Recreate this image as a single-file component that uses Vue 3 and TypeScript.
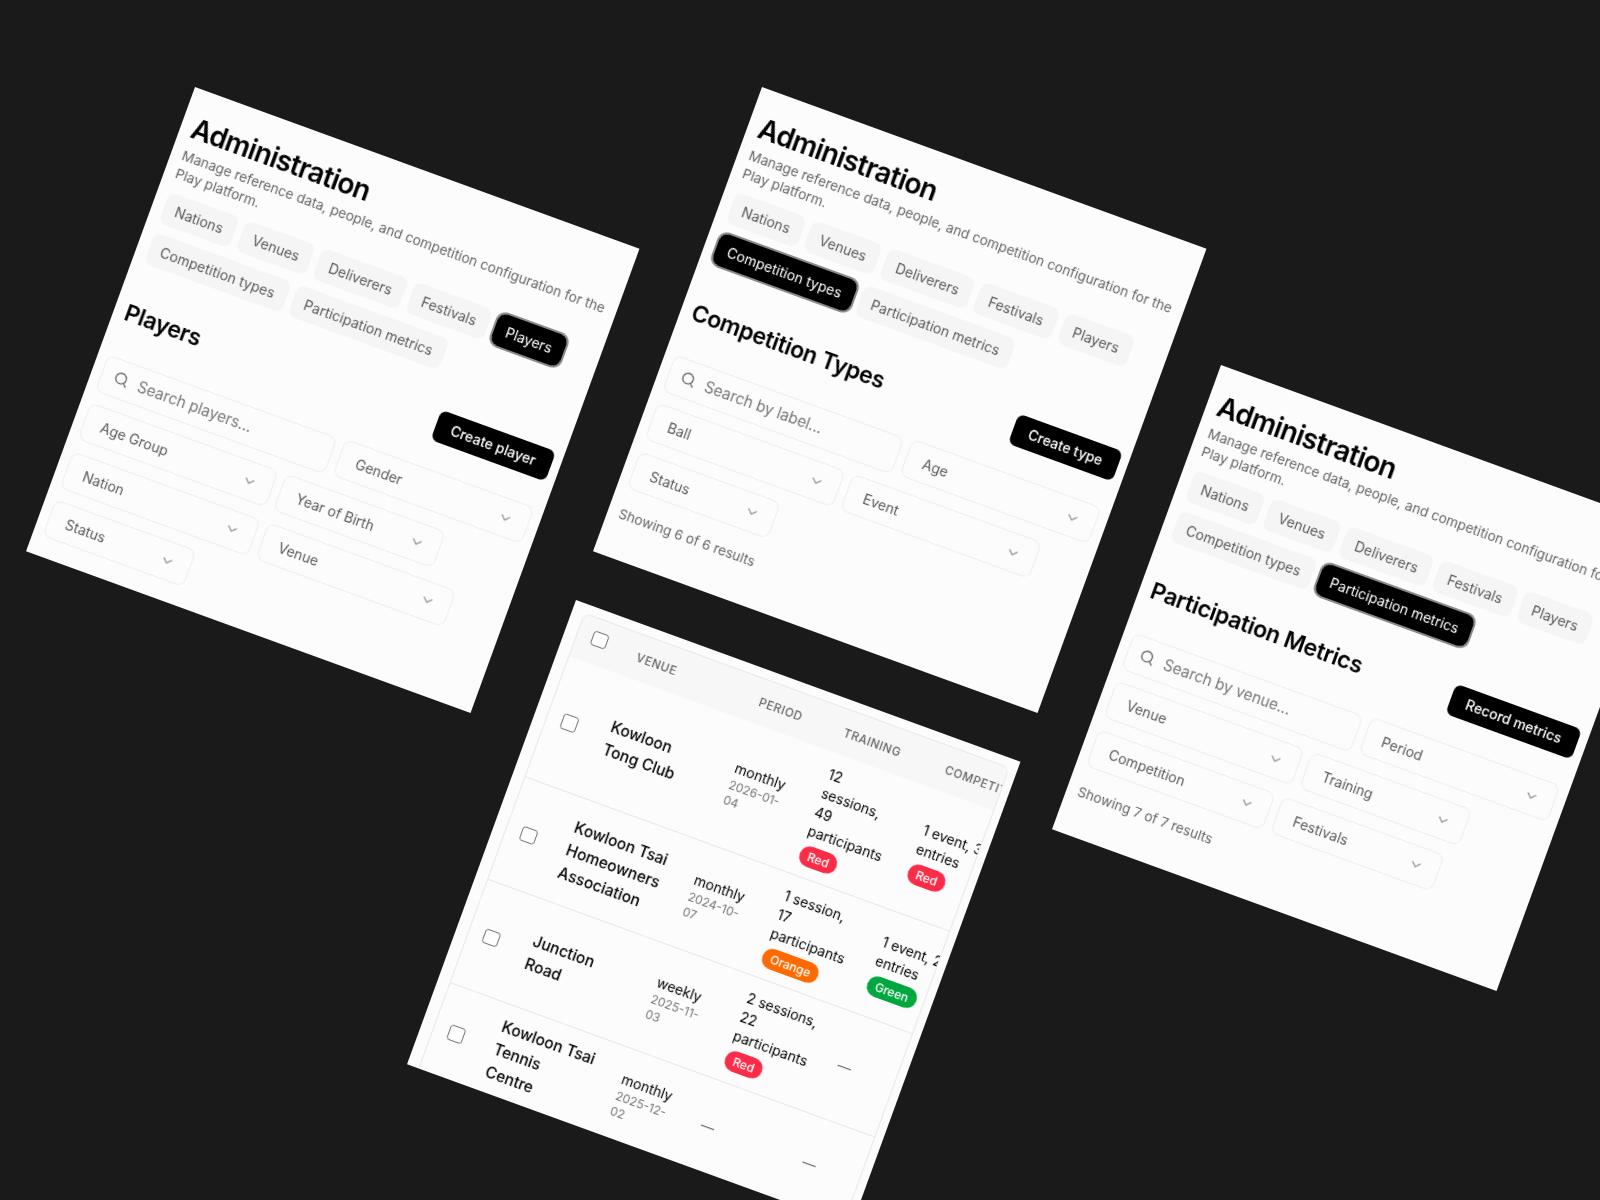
<script setup lang="ts">
interface Filter { label: string; width: number }
interface AdminPanel {
  id: string
  active: string
  heading: string
  button: string
  search: string
  filters: Filter[]
  results: string
}
interface Badge { text: string; tone: string }
interface MetricRow {
  venue: string
  period: string
  date: string
  training: string
  trainingBadge?: Badge
  competition: string
  competitionBadge?: Badge
}

const tabs = ['Nations', 'Venues', 'Deliverers', 'Festivals', 'Players', 'Competition types', 'Participation metrics']

const panels: AdminPanel[] = [
  {
    id: 'players', active: 'Players', heading: 'Players', button: 'Create player', search: 'Search players...',
    filters: [
      { label: 'Gender', width: 200.5 }, { label: 'Age Group', width: 200 }, { label: 'Year of Birth', width: 170 },
      { label: 'Nation', width: 200 }, { label: 'Venue', width: 200 }, { label: 'Status', width: 150 },
    ],
    results: '',
  },
  {
    id: 'types', active: 'Competition types', heading: 'Competition Types', button: 'Create type', search: 'Search by label...',
    filters: [
      { label: 'Age', width: 200.5 }, { label: 'Ball', width: 200 }, { label: 'Event', width: 201 }, { label: 'Status', width: 150 },
    ],
    results: 'Showing 6 of 6 results',
  },
  {
    id: 'metrics', active: 'Participation metrics', heading: 'Participation Metrics', button: 'Record metrics', search: 'Search by venue...',
    filters: [
      { label: 'Period', width: 200.5 }, { label: 'Venue', width: 200 }, { label: 'Training', width: 170 },
      { label: 'Competition', width: 188 }, { label: 'Festivals', width: 172 },
    ],
    results: 'Showing 7 of 7 results',
  },
]

const columns = ['Venue', 'Period', 'Training', 'Competitions']

const rows: MetricRow[] = [
  { venue: 'Kowloon Tong Club', period: 'monthly', date: '2026-01-04', training: '12 sessions, 49 participants', trainingBadge: { text: 'Red', tone: 'red' }, competition: '1 event, 3 entries', competitionBadge: { text: 'Red', tone: 'red' } },
  { venue: 'Kowloon Tsai Homeowners Association', period: 'monthly', date: '2024-10-07', training: '1 session, 17 participants', trainingBadge: { text: 'Orange', tone: 'orange' }, competition: '1 event, 2 entries', competitionBadge: { text: 'Green', tone: 'green' } },
  { venue: 'Junction Road', period: 'weekly', date: '2025-11-03', training: '2 sessions, 22 participants', trainingBadge: { text: 'Red', tone: 'red' }, competition: '—' },
  { venue: 'Kowloon Tsai Tennis Centre', period: 'monthly', date: '2025-12-02', training: '—', competition: '—' },
]
</script>

<template>
  <main class="stage">
    <section v-for="p in panels" :key="p.id" class="panel" :class="`panel-${p.id}`">
      <h1 class="title">Administration</h1>
      <p class="subtitle">Manage reference data, people, and competition configuration for the Play platform.</p>
      <nav class="tabs">
        <button v-for="t in tabs" :key="t" class="tab" :class="{ active: t === p.active }">{{ t }}</button>
      </nav>
      <header class="section-head">
        <h2 class="heading">{{ p.heading }}</h2>
        <button class="primary">{{ p.button }}</button>
      </header>
      <div class="filters">
        <div class="search">
          <svg class="search-icon" viewBox="0 0 24 24" fill="none" stroke="currentColor" stroke-width="2" stroke-linecap="round" stroke-linejoin="round">
            <circle cx="11" cy="11" r="8" />
            <path d="m21 21-4.3-4.3" />
          </svg>
          <span>{{ p.search }}</span>
        </div>
        <div v-for="f in p.filters" :key="f.label" class="select" :style="{ width: f.width + 'px' }">
          <span>{{ f.label }}</span>
          <svg class="chevron" viewBox="0 0 24 24" fill="none" stroke="currentColor" stroke-width="2" stroke-linecap="round" stroke-linejoin="round">
            <path d="m6 9 6 6 6-6" />
          </svg>
        </div>
      </div>
      <p v-if="p.results" class="results">{{ p.results }}</p>
    </section>

    <section class="panel panel-table">
      <div class="table">
        <div class="row head">
          <span class="check"></span>
          <span v-for="c in columns" :key="c" class="th">{{ c }}</span>
        </div>
        <div v-for="r in rows" :key="r.venue" class="row">
          <span class="check"></span>
          <div class="cell venue">{{ r.venue }}</div>
          <div class="cell period">
            <div>{{ r.period }}</div>
            <div class="date">{{ r.date }}</div>
          </div>
          <div class="cell training" :class="{ dash: r.training === '—' }">
            <div>{{ r.training }}</div>
            <span v-if="r.trainingBadge" class="badge" :class="r.trainingBadge.tone">{{ r.trainingBadge.text }}</span>
          </div>
          <div class="cell competition" :class="{ dash: r.competition === '—' }">
            <div>{{ r.competition }}</div>
            <span v-if="r.competitionBadge" class="badge" :class="r.competitionBadge.tone">{{ r.competitionBadge.text }}</span>
          </div>
        </div>
      </div>
    </section>
  </main>
</template>

<style>
html, body { background: #1a1a1a; }
</style>

<style scoped>
.stage {
  position: relative;
  width: 1600px;
  height: 1200px;
  overflow: hidden;
  background: #1a1a1a;
  font-family: Inter, "Noto Sans", sans-serif;
  color: #000;
}
.panel {
  position: absolute;
  width: 473px;
  height: 494px;
  box-sizing: border-box;
  padding: 23px 11.6px 0;
  overflow: hidden;
  background: #fcfcfc;
  transform: rotate(20deg);
  transform-origin: 0 0;
  will-change: transform;
}
.panel-players { left: 194.5px; top: 86.8px; }
.panel-types { left: 762.4px; top: 86.8px; }
.panel-metrics { left: 1221.2px; top: 365.3px; }
.panel-table { left: 576px; top: 600px; padding: 9px 11.6px 0; }

.title {
  margin: 0;
  font-size: 28px;
  line-height: 32px;
  font-weight: 600;
  letter-spacing: -0.025em;
}
.subtitle {
  margin: 3.6px 0 0;
  font-size: 13.65px;
  line-height: 19px;
  color: #666;
}
.tabs {
  display: flex;
  flex-wrap: wrap;
  gap: 10px 7px;
  margin-top: 10.5px;
}
.tab {
  height: 33px;
  padding: 0 12.5px;
  border: 0;
  border-radius: 8px;
  background: #f5f5f5;
  color: #5a5a5a;
  font: 400 14px/33px Inter, sans-serif;
}
.tab.active {
  background: #000;
  color: #fff;
  outline: 2px solid #8a8a8a;
}
.section-head {
  display: flex;
  align-items: center;
  justify-content: space-between;
  margin: 35.5px -2.2px 0 0;
}
.heading {
  margin: 0;
  font-size: 23px;
  line-height: 32px;
  font-weight: 600;
  letter-spacing: -0.015em;
}
.primary {
  height: 32px;
  padding: 0 16px;
  border: 0;
  border-radius: 7px;
  background: #000;
  color: #fff;
  font: 500 14px/32px Inter, sans-serif;
}
.filters {
  display: flex;
  flex-wrap: wrap;
  gap: 12.6px 8px;
  margin: 30px -1.6px 0;
}
.search,
.select {
  box-sizing: border-box;
  display: flex;
  align-items: center;
  height: 39px;
  border: 1px solid #eee;
  border-radius: 8px;
}
.search {
  width: 244px;
  gap: 10px;
  padding: 0 11.7px;
  color: #777;
  font-size: 15.3px;
}
.search-icon {
  width: 16px;
  height: 16px;
  flex: none;
  color: #666;
}
.select {
  justify-content: space-between;
  padding: 0 15px 0 17px;
  color: #5a5a5a;
  font-size: 14px;
}
.select:nth-child(2) {
  margin: -1.5px 0 1.5px;
}
.chevron {
  width: 16px;
  height: 16px;
  flex: none;
  color: #999;
}
.results {
  margin: 17px 0 0;
  font-size: 13.6px;
  line-height: 19px;
  color: #666;
}

.table {
  height: 560px;
  overflow: hidden;
  margin-right: -3.5px;
  border: 1px solid #e8e8e8;
  border-radius: 8px;
}
.row {
  display: grid;
  grid-template-columns: 64px 130.4px 90px 108px 130px;
  align-items: center;
  width: 600px;
  padding: 11.6px 0;
  border-bottom: 1px solid #e8e8e8;
  font-size: 14px;
  line-height: 20px;
}
.row.head {
  padding: 0;
  height: 45px;
  box-sizing: border-box;
  background: #f7f7f7;
  border-bottom: 0;
}
.check {
  box-sizing: border-box;
  width: 15.5px;
  height: 15.5px;
  margin: 0 0 2px 15.6px;
  border: 1px solid #767676;
  border-radius: 3px;
  background: #fff;
}
.head .check { margin-bottom: 6px; }
.th {
  font-size: 11.6px;
  font-weight: 500;
  letter-spacing: 0.05em;
  text-transform: uppercase;
  color: #666;
  white-space: nowrap;
}
.cell { box-sizing: border-box; padding-right: 32px; }
.venue {
  padding-right: 30.4px;
  font-size: 15.5px;
  line-height: 24px;
  font-weight: 500;
}
.period { padding-right: 30px; }
.date {
  font-size: 12px;
  line-height: 16px;
  color: #777;
}
.dash { color: #666; }
.badge {
  display: inline-block;
  height: 21px;
  margin-top: 4px;
  padding: 0 8.5px;
  border-radius: 999px;
  font-size: 12px;
  font-weight: 500;
  line-height: 21px;
  color: #fff;
}
.red { background: #fb2c47; }
.orange { background: #ff6a00; }
.green { background: #00a63e; }
</style>
